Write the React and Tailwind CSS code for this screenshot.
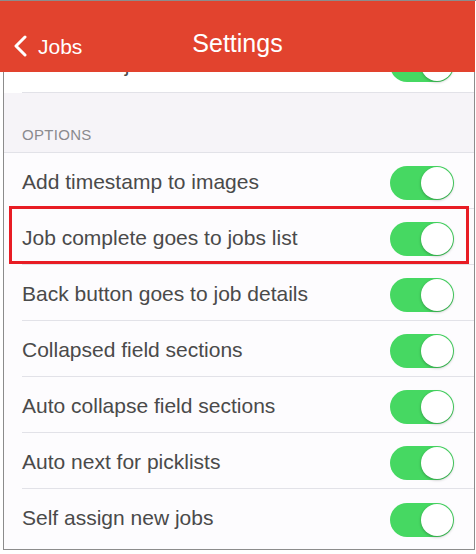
import React from 'react';

const options = [
  'Add timestamp to images',
  'Job complete goes to jobs list',
  'Back button goes to job details',
  'Collapsed field sections',
  'Auto collapse field sections',
  'Auto next for picklists',
  'Self assign new jobs',
];

const Toggle = () => (
  <div className="w-[64px] h-[34px] rounded-full bg-[#46d862] flex items-center justify-end pr-[1px] shrink-0">
    <div className="w-[32px] h-[32px] rounded-full bg-white shadow-[0_1px_3px_rgba(0,0,0,0.3)]" />
  </div>
);

const Row = ({ label, highlight, last }) => (
  <div className="relative h-[56px] pl-[18px]">
    <div className={`h-full flex items-center justify-between pr-[20px] ${last ? '' : 'border-b border-[#e2e2e8]'}`}>
      <span className="text-[21px] text-[#4a4a4a] pt-[2px]">{label}</span>
      <div className="pt-[5px]">
        <Toggle />
      </div>
    </div>
    {highlight && (
      <div className="absolute left-[5px] right-[5px] top-[-3px] bottom-[1px] border-[3px] border-[#e81c24]" />
    )}
  </div>
);

const App = () => {
  return (
    <div className="w-[476px] h-[554px] bg-white overflow-hidden" style={{ fontFamily: '"Liberation Sans", Arial, sans-serif' }}>
      <div className="h-[1px] bg-[#8c8c8c]" />
      {/* Nav bar */}
      <div className="h-[71px] w-[475px] bg-[#e2432e] relative flex items-center justify-center text-white">
        <div className="absolute left-[13px] top-[34px] flex items-center">
          <svg width="16" height="22" viewBox="0 0 16 22" fill="none" stroke="white" strokeWidth="3" strokeLinecap="round" strokeLinejoin="round">
            <path d="M12 2 L3 11 L12 20" />
          </svg>
          <span className="ml-[9px] text-[21px] leading-none">Jobs</span>
        </div>
        <span className="text-[25px] mt-[14px] leading-none">Settings</span>
      </div>
      {/* Body */}
      <div className="ml-[3px] w-[472px] h-[478px] border-l border-r border-b border-[#8c8c8c] overflow-hidden bg-[#fdfcfe]">
        <div className="-mt-[35px]">
          <div className="h-[56px] pl-[18px] bg-white">
            <div className="h-full flex items-center justify-between pr-[20px] border-b border-[#e2e2e8]">
              <span className="text-[21px] text-[#4a4a4a]">Show new job alerts</span>
              <Toggle />
            </div>
          </div>
          <div className="h-[60px] bg-[#f6f4f8] flex items-end pl-[18px] pb-[6px] border-b border-[#e2e2e8]">
            <span className="text-[15px] text-[#8a8a8e] tracking-[0.3px]">OPTIONS</span>
          </div>
          {options.map((o, i) => (
            <Row key={o} label={o} highlight={i === 1} last={i === options.length - 1} />
          ))}
        </div>
      </div>
    </div>
  );
};

export default App;
